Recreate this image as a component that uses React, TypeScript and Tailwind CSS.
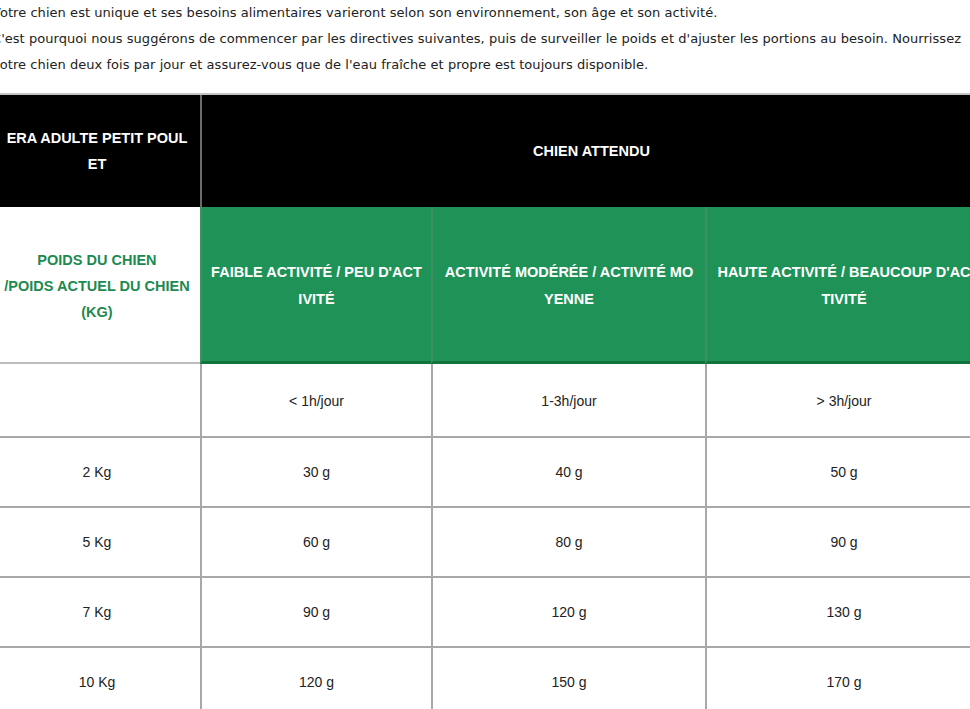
import React from "react";

const font = { fontFamily: '"Liberation Sans", Arial, sans-serif' };

const rows = [
  ["", "< 1h/jour", "1-3h/jour", "> 3h/jour"],
  ["2 Kg", "30 g", "40 g", "50 g"],
  ["5 Kg", "60 g", "80 g", "90 g"],
  ["7 Kg", "90 g", "120 g", "130 g"],
  ["10 Kg", "120 g", "150 g", "170 g"],
];

export default function App() {
  return (
    <div
      className="w-[970px] h-[709px] overflow-hidden bg-white"
      style={font}
    >
      <div
        className="ml-[-8px] text-[13px] leading-[26px] text-[#222] whitespace-nowrap tracking-[0.05px]"
        style={{ fontFamily: '"DejaVu Sans", Verdana, sans-serif' }}
      >
        <div>
          Votre chien est unique et ses besoins alimentaires varieront selon son
          environnement, son âge et son activité.
        </div>
        <div>
          C'est pourquoi nous suggérons de commencer par les directives
          suivantes, puis de surveiller le poids et d'ajuster les portions au
          besoin. Nourrissez
        </div>
        <div>
          votre chien deux fois par jour et assurez-vous que de l'eau fraîche
          et propre est toujours disponible.
        </div>
      </div>

      <div className="ml-[-6px] mt-[15px] w-[987px] border-t-2 border-[#c4c4c4]">
        {/* Row 1 */}
        <div className="grid grid-cols-[206px_781px] h-[112px] bg-black text-white font-bold text-[14.5px] leading-[26px]">
          <div className="flex items-center justify-center text-center whitespace-nowrap">
            <div>
              ERA ADULTE PETIT POUL
              <br />
              ET
            </div>
          </div>
          <div className="flex items-center justify-center border-l-2 border-[#6b6b6b]">
            CHIEN ATTENDU
          </div>
        </div>

        {/* Row 2 */}
        <div className="grid grid-cols-[206px_231px_274px_276px] h-[157px] font-bold text-[14.5px] leading-[27px]">
          <div className="flex items-center justify-center text-center text-[#1d8a4f] leading-[26px] border-b-2 border-[#bdbdbd] whitespace-nowrap">
            <div className="mt-[2px]">
              POIDS DU CHIEN
              <br />
              /POIDS ACTUEL DU CHIEN
              <br />
              (KG)
            </div>
          </div>
          <div className="flex items-center justify-center text-center bg-[#1f9357] text-white border-l-2 border-[#3f8f63] border-b-[3px] border-b-[#13733d] whitespace-nowrap">
            <div className="mt-[4px]">
              FAIBLE ACTIVITÉ / PEU D'ACT
              <br />
              IVITÉ
            </div>
          </div>
          <div className="flex items-center justify-center text-center bg-[#1f9357] text-white border-l-2 border-[#3f8f63] border-b-[3px] border-b-[#13733d] whitespace-nowrap">
            <div className="mt-[4px]">
              ACTIVITÉ MODÉRÉE / ACTIVITÉ MO
              <br />
              YENNE
            </div>
          </div>
          <div className="flex items-center justify-center text-center bg-[#1f9357] text-white border-l-2 border-[#3f8f63] border-b-[3px] border-b-[#13733d] whitespace-nowrap">
            <div className="mt-[4px]">
              HAUTE ACTIVITÉ / BEAUCOUP D'AC
              <br />
              TIVITÉ
            </div>
          </div>
        </div>

        {/* Data rows */}
        {rows.map((r, i) => (
          <div
            key={i}
            className={
              i === 0
                ? "grid grid-cols-[206px_231px_274px_276px] h-[72px] text-[14px] text-[#222]"
                : "grid grid-cols-[206px_231px_274px_276px] h-[70px] text-[14px] text-[#222] border-t-2 border-[#a8a8a8]"
            }
          >
            {r.map((c, j) => (
              <div
                key={j}
                className={
                  j === 0
                    ? "flex items-center justify-center"
                    : "flex items-center justify-center border-l-2 border-[#a8a8a8]"
                }
              >
                <span className={i === 0 ? "mt-[3px]" : ""}>{c}</span>
              </div>
            ))}
          </div>
        ))}
      </div>
    </div>
  );
}
